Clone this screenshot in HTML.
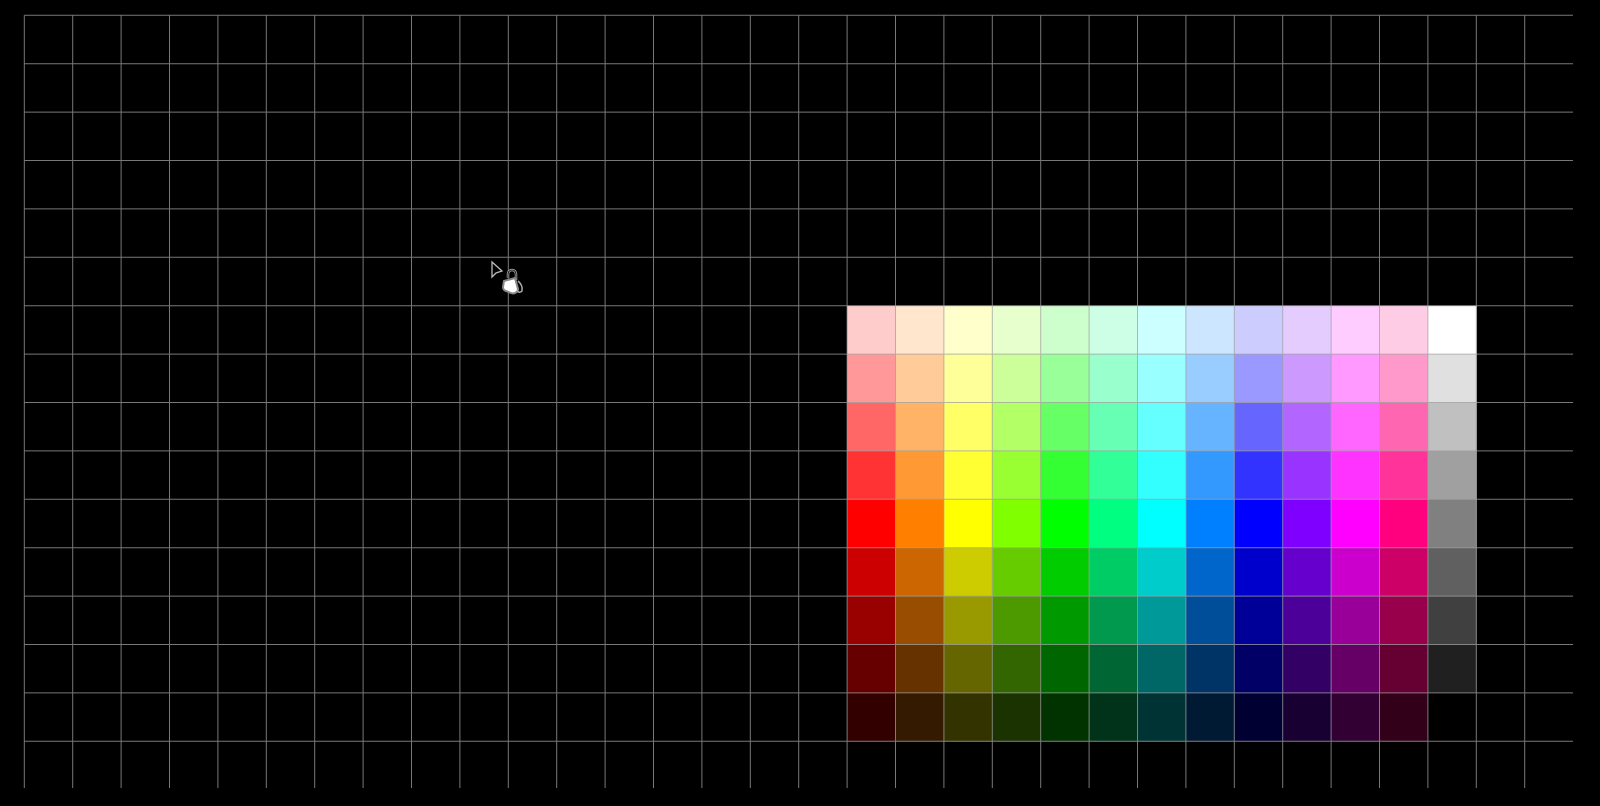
<!DOCTYPE html>
<html><head><style>html,body{margin:0;padding:0;background:#000;width:1600px;height:806px;overflow:hidden}</style></head>
<body>
<svg id="s" width="1600" height="806" xmlns="http://www.w3.org/2000/svg" style="display:block"></svg>
<script>
const s=document.getElementById('s');const NS='http://www.w3.org/2000/svg';
const C=48.4,X0=24.3,Y0=15.3;
const hues=[[255,0,0],[255,128,0],[255,255,0],[128,255,0],[0,255,0],[0,255,128],[0,255,255],[0,128,255],[0,0,255],[127,0,255],[255,0,255],[255,0,127]];
const tints=[0.8,0.6,0.4,0.2,0];const shades=[0.8,0.6,0.4,0.2];
const greys=[255,224,192,160,128,96,64,32,0];
function rect(x,y,w,h,f){const r=document.createElementNS(NS,'rect');r.setAttribute('x',x);r.setAttribute('y',y);r.setAttribute('width',w);r.setAttribute('height',h);r.setAttribute('fill',f);s.appendChild(r);}
for(let r=0;r<9;r++){for(let c=0;c<13;c++){let col;
 if(c==12){const g=greys[r];col=`rgb(${g},${g},${g})`;}
 else{const h=hues[c];let v;if(r<5){const t=tints[r];v=h.map(x=>Math.round(x+(255-x)*t));}else{const f=shades[r-5];v=h.map(x=>Math.round(x*f));}col=`rgb(${v})`;}
 rect(X0+(17+c)*C,Y0+(6+r)*C,C+0.5,C+0.5,col);}}
let p='';
for(let i=0;i<32;i++){const x=(X0+i*C).toFixed(1);p+=`M${x} ${Y0}V788`;}
for(let j=0;j<16;j++){const y=(Y0+j*C).toFixed(1);p+=`M${X0} ${y}H1573`;}
const path=document.createElementNS(NS,'path');path.setAttribute('d',p);path.setAttribute('stroke','rgba(160,160,160,0.75)');path.setAttribute('stroke-width','1');path.setAttribute('fill','none');s.appendChild(path);
</script>
<svg width="1600" height="806" style="position:absolute;left:0;top:0" xmlns="http://www.w3.org/2000/svg">
<path d="M492 262 L492 277 L496 273 L502 271 Z" fill="#000" stroke="#bbb" stroke-width="1.3"/>
<path d="M508 278 v-4 a4 4 0 0 1 8 0 v6" fill="none" stroke="#aaa" stroke-width="2.5"/>
<path d="M508 278 v-4 a4 4 0 0 1 8 0 v6" fill="none" stroke="#000" stroke-width="0.8"/>
<path d="M504 281 l11 -3 l3 11 a5 5 0 0 1 -7 4 l-5 -2 a4 4 0 0 1 -3 -4 z" fill="#fff" stroke="#888" stroke-width="2"/>
<path d="M518 281 q5 4 4 10 q-3 3 -5 -1" fill="none" stroke="#aaa" stroke-width="1.5"/>
</svg>
</body></html>
